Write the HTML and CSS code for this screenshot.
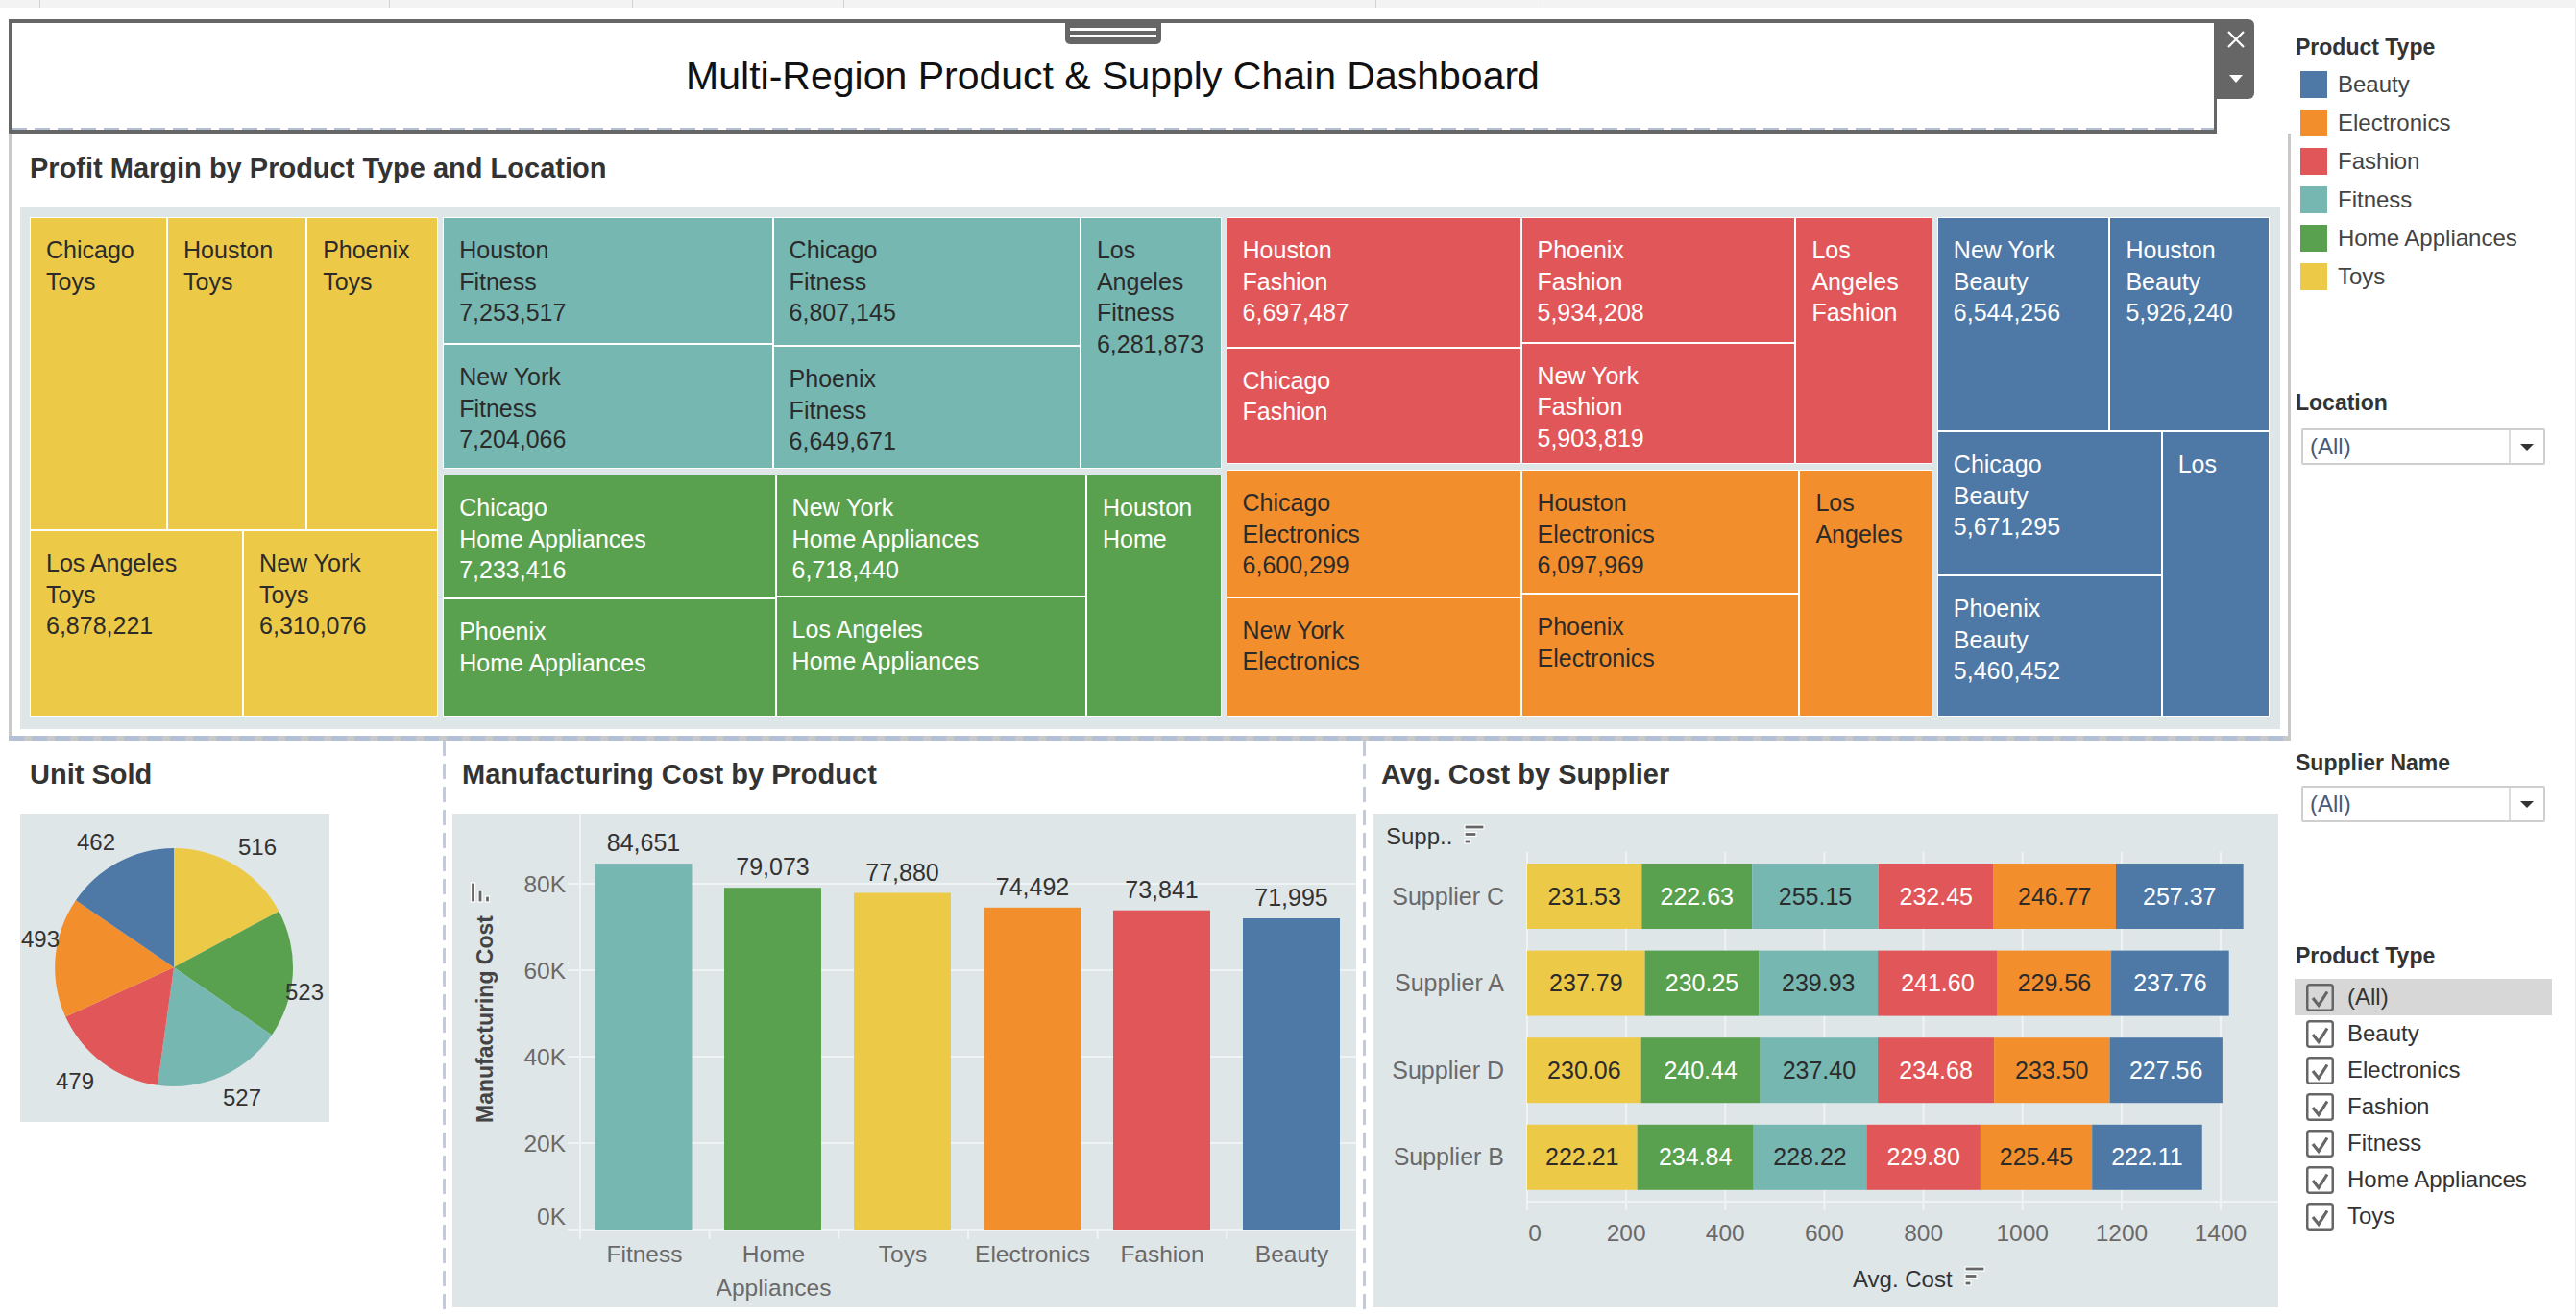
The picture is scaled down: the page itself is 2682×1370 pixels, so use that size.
FILE: index.html
```html
<!DOCTYPE html>
<html>
<head>
<meta charset="utf-8">
<link rel="stylesheet" href="styles.css">
</head>
<body>
<div class="strip">
  <div class="stab s1"></div><div class="stab s2"></div><div class="stab s3"></div><div class="stab s4"></div><div class="stab s5"></div><div class="stab s6"></div>
</div>
<div class="page">
  <div class="left">
    <div class="titlerow">
      <div class="titlebox">
        <div class="handle"></div>
        <div class="titletext">Multi-Region Product &amp; Supply Chain Dashboard</div>
        <div class="dash-in"></div>
      </div>
      <div class="tab">
        <svg class="tab-x" width="18" height="18" viewBox="0 0 18 18"><path d="M1 1 L17 17 M17 1 L1 17" stroke="#fff" stroke-width="2.2" fill="none"/></svg>
        <svg class="tab-arrow" width="14" height="8" viewBox="0 0 14 8"><path d="M0 0 H14 L7 8 Z" fill="#fff"/></svg>
      </div>
    </div>

    <div class="tmpanel">
      <div class="ptitle">Profit Margin by Product Type and Location</div>
      <div class="tmbg">
        <div class="tm">
          <div class="col" style="flex-grow:425">
            <div class="row" style="flex-grow:326">
              <div class="t toys" style="flex-grow:143"><div class="tx"><div>Chicago</div><div>Toys</div></div></div>
              <div class="t toys" style="flex-grow:145"><div class="tx"><div>Houston</div><div>Toys</div></div></div>
              <div class="t toys" style="flex-grow:137"><div class="tx"><div>Phoenix</div><div>Toys</div></div></div>
            </div>
            <div class="row" style="flex-grow:194">
              <div class="t toys" style="flex-grow:222"><div class="tx"><div>Los Angeles</div><div>Toys</div><div>6,878,221</div></div></div>
              <div class="t toys" style="flex-grow:203"><div class="tx"><div>New York</div><div>Toys</div><div>6,310,076</div></div></div>
            </div>
          </div>

          <div class="col gcol" style="flex-grow:810">
            <div class="row" style="flex-grow:261">
              <div class="col" style="flex-grow:342">
                <div class="t fit" style="flex-grow:131"><div class="tx"><div>Houston</div><div>Fitness</div><div>7,253,517</div></div></div>
                <div class="t fit" style="flex-grow:129"><div class="tx"><div>New York</div><div>Fitness</div><div>7,204,066</div></div></div>
              </div>
              <div class="col" style="flex-grow:319">
                <div class="t fit" style="flex-grow:133"><div class="tx"><div>Chicago</div><div>Fitness</div><div>6,807,145</div></div></div>
                <div class="t fit" style="flex-grow:127"><div class="tx"><div>Phoenix</div><div>Fitness</div><div>6,649,671</div></div></div>
              </div>
              <div class="t fit" style="flex-grow:146"><div class="tx"><div>Los</div><div>Angeles</div><div>Fitness</div><div>6,281,873</div></div></div>
            </div>
            <div class="row" style="flex-grow:251">
              <div class="col" style="flex-grow:345">
                <div class="t home" style="flex-grow:128"><div class="tx"><div>Chicago</div><div>Home Appliances</div><div>7,233,416</div></div></div>
                <div class="t home" style="flex-grow:122"><div class="tx"><div>Phoenix</div><div>Home Appliances</div></div></div>
              </div>
              <div class="col" style="flex-grow:322">
                <div class="t home" style="flex-grow:126"><div class="tx"><div>New York</div><div>Home Appliances</div><div>6,718,440</div></div></div>
                <div class="t home" style="flex-grow:124"><div class="tx"><div>Los Angeles</div><div>Home Appliances</div></div></div>
              </div>
              <div class="t home" style="flex-grow:140"><div class="tx"><div>Houston</div><div>Home</div></div></div>
            </div>
          </div>

          <div class="col gcol" style="flex-grow:735">
            <div class="row" style="flex-grow:257">
              <div class="col" style="flex-grow:306">
                <div class="t fash" style="flex-grow:135"><div class="tx"><div>Houston</div><div>Fashion</div><div>6,697,487</div></div></div>
                <div class="t fash" style="flex-grow:121"><div class="tx"><div>Chicago</div><div>Fashion</div></div></div>
              </div>
              <div class="col" style="flex-grow:285">
                <div class="t fash" style="flex-grow:130"><div class="tx"><div>Phoenix</div><div>Fashion</div><div>5,934,208</div></div></div>
                <div class="t fash" style="flex-grow:126"><div class="tx"><div>New York</div><div>Fashion</div><div>5,903,819</div></div></div>
              </div>
              <div class="t fash" style="flex-grow:142"><div class="tx"><div>Los</div><div>Angeles</div><div>Fashion</div></div></div>
            </div>
            <div class="row" style="flex-grow:257">
              <div class="col" style="flex-grow:306">
                <div class="t elec" style="flex-grow:132"><div class="tx"><div>Chicago</div><div>Electronics</div><div>6,600,299</div></div></div>
                <div class="t elec" style="flex-grow:124"><div class="tx"><div>New York</div><div>Electronics</div></div></div>
              </div>
              <div class="col" style="flex-grow:289">
                <div class="t elec" style="flex-grow:128"><div class="tx"><div>Houston</div><div>Electronics</div><div>6,097,969</div></div></div>
                <div class="t elec" style="flex-grow:127"><div class="tx"><div>Phoenix</div><div>Electronics</div></div></div>
              </div>
              <div class="t elec" style="flex-grow:138"><div class="tx"><div>Los</div><div>Angeles</div></div></div>
            </div>
          </div>

          <div class="col" style="flex-grow:346">
            <div class="row" style="flex-grow:223">
              <div class="t beau" style="flex-grow:179"><div class="tx"><div>New York</div><div>Beauty</div><div>6,544,256</div></div></div>
              <div class="t beau" style="flex-grow:166"><div class="tx"><div>Houston</div><div>Beauty</div><div>5,926,240</div></div></div>
            </div>
            <div class="row" style="flex-grow:296">
              <div class="col" style="flex-grow:233">
                <div class="t beau" style="flex-grow:149"><div class="tx"><div>Chicago</div><div>Beauty</div><div>5,671,295</div></div></div>
                <div class="t beau" style="flex-grow:146"><div class="tx"><div>Phoenix</div><div>Beauty</div><div>5,460,452</div></div></div>
              </div>
              <div class="t beau" style="flex-grow:112"><div class="tx"><div>Los</div></div></div>
            </div>
          </div>
        </div>
      </div>
    </div>
    <div class="hdash"></div>

    <div class="bottom">
      <div class="panel p1">
        <div class="ptitle">Unit Sold</div>
        <svg class="chart" width="322" height="321" viewBox="0 0 322 321">
          <rect width="322" height="321" fill="#dfe6e8"/>
          <path d="M160 160 L160 36 A124 124 0 0 1 269.42 101.65 Z" fill="#edc948"/>
          <path d="M160 160 L269.42 101.65 A124 124 0 0 1 261.95 230.57 Z" fill="#59a14f"/>
          <path d="M160 160 L261.95 230.57 A124 124 0 0 1 142.91 282.82 Z" fill="#76b7b2"/>
          <path d="M160 160 L142.91 282.82 A124 124 0 0 1 47.26 211.62 Z" fill="#e15759"/>
          <path d="M160 160 L47.26 211.62 A124 124 0 0 1 57.89 90.33 Z" fill="#f28e2b"/>
          <path d="M160 160 L57.89 90.33 A124 124 0 0 1 160 36 Z" fill="#4e79a7"/>
          <text class="pl" x="79" y="37.5">462</text>
          <text class="pl" x="247" y="42.5">516</text>
          <text class="pl" x="21" y="138.5">493</text>
          <text class="pl" x="296" y="193.5">523</text>
          <text class="pl" x="231" y="303.5">527</text>
          <text class="pl" x="57" y="286.5">479</text>
        </svg>
      </div>
      <div class="vdash"></div>
      <div class="panel p2">
        <div class="ptitle">Manufacturing Cost by Product</div>
        <svg class="chart" width="941" height="514" viewBox="0 0 941 514">
          <rect width="941" height="514" fill="#dfe6e8"/>
          <g stroke="#f0f3f4" stroke-width="2">
            <line x1="133" y1="0" x2="133" y2="434"/>
            <line x1="120" y1="73" x2="941" y2="73"/>
            <line x1="120" y1="163" x2="941" y2="163"/>
            <line x1="120" y1="253" x2="941" y2="253"/>
            <line x1="120" y1="343" x2="941" y2="343"/>
            <line x1="120" y1="433" x2="941" y2="433"/>
            <line x1="133" y1="434" x2="133" y2="443"/>
            <line x1="267.7" y1="434" x2="267.7" y2="443"/>
            <line x1="402.3" y1="434" x2="402.3" y2="443"/>
            <line x1="537" y1="434" x2="537" y2="443"/>
            <line x1="671.7" y1="434" x2="671.7" y2="443"/>
            <line x1="806.3" y1="434" x2="806.3" y2="443"/>
          </g>
          <rect x="148.5" y="52.1" width="101" height="380.9" fill="#76b7b2"/>
          <rect x="283" y="77.2" width="101" height="355.8" fill="#59a14f"/>
          <rect x="418" y="82.5" width="101" height="350.5" fill="#edc948"/>
          <rect x="553.5" y="97.8" width="101" height="335.2" fill="#f28e2b"/>
          <rect x="688" y="100.7" width="101" height="332.3" fill="#e15759"/>
          <rect x="823" y="109" width="101" height="324" fill="#4e79a7"/>
          <g class="vl">
            <text x="199" y="39.1">84,651</text>
            <text x="333.5" y="64.2">79,073</text>
            <text x="468.5" y="69.5">77,880</text>
            <text x="604" y="84.8">74,492</text>
            <text x="738.5" y="87.7">73,841</text>
            <text x="873.5" y="96">71,995</text>
          </g>
          <g class="tk tk-end">
            <text x="118" y="81.5">80K</text>
            <text x="118" y="171.5">60K</text>
            <text x="118" y="261.5">40K</text>
            <text x="118" y="351.5">20K</text>
            <text x="118" y="427.5">0K</text>
          </g>
          <g class="tk tk-mid">
            <text x="200" y="466.5">Fitness</text>
            <text x="334.5" y="466.5">Home</text>
            <text x="334.5" y="501.5">Appliances</text>
            <text x="469" y="466.5">Toys</text>
            <text x="604" y="466.5">Electronics</text>
            <text x="739" y="466.5">Fashion</text>
            <text x="874" y="466.5">Beauty</text>
          </g>
          <text class="axt" transform="translate(42 214) rotate(-90)">Manufacturing Cost</text>
          <g fill="#666" stroke="#fff" stroke-width="1.2">
            <rect x="19.5" y="72" width="4" height="20"/>
            <rect x="27" y="80" width="4" height="12"/>
            <rect x="34.5" y="86" width="4" height="6"/>
          </g>
        </svg>
      </div>
      <div class="vdash"></div>
      <div class="panel p3">
        <div class="ptitle">Avg. Cost by Supplier</div>
        <svg class="chart" width="943" height="514" viewBox="0 0 943 514">
          <rect width="943" height="514" fill="#dfe6e8"/>
          <g stroke="#f0f3f4" stroke-width="2">
            <line x1="161" y1="40" x2="161" y2="413"/>
            <line x1="264.1" y1="40" x2="264.1" y2="413"/>
            <line x1="367.3" y1="40" x2="367.3" y2="413"/>
            <line x1="470.4" y1="40" x2="470.4" y2="413"/>
            <line x1="573.6" y1="40" x2="573.6" y2="413"/>
            <line x1="676.7" y1="40" x2="676.7" y2="413"/>
            <line x1="779.9" y1="40" x2="779.9" y2="413"/>
            <line x1="883" y1="40" x2="883" y2="413"/>
            <line x1="161" y1="404" x2="943" y2="404"/>
          </g>
          <text class="hd" x="14" y="32">Supp..</text>
          <g fill="#666" stroke="#fff" stroke-width="1.2">
            <rect x="96" y="12" width="20" height="4"/>
            <rect x="96" y="19.5" width="12" height="4"/>
            <rect x="96" y="27" width="6" height="4"/>
          </g>
          <g class="tk tk-end sup">
            <text x="137" y="94.5">Supplier C</text>
            <text x="137" y="185.1">Supplier A</text>
            <text x="137" y="275.7">Supplier D</text>
            <text x="137" y="366.3">Supplier B</text>
          </g>
          <!-- Supplier C -->
          <rect x="161" y="52" width="119.4" height="68" fill="#edc948"/>
          <rect x="280.4" y="52" width="114.81" height="68" fill="#59a14f"/>
          <rect x="395.21" y="52" width="131.58" height="68" fill="#76b7b2"/>
          <rect x="526.79" y="52" width="119.88" height="68" fill="#e15759"/>
          <rect x="646.67" y="52" width="127.26" height="68" fill="#f28e2b"/>
          <rect x="773.93" y="52" width="132.73" height="68" fill="#4e79a7"/>
          <!-- Supplier A -->
          <rect x="161" y="142.6" width="122.63" height="68" fill="#edc948"/>
          <rect x="283.63" y="142.6" width="118.74" height="68" fill="#59a14f"/>
          <rect x="402.37" y="142.6" width="123.73" height="68" fill="#76b7b2"/>
          <rect x="526.1" y="142.6" width="124.6" height="68" fill="#e15759"/>
          <rect x="650.7" y="142.6" width="118.39" height="68" fill="#f28e2b"/>
          <rect x="769.09" y="142.6" width="122.62" height="68" fill="#4e79a7"/>
          <!-- Supplier D -->
          <rect x="161" y="233.2" width="118.64" height="68" fill="#edc948"/>
          <rect x="279.64" y="233.2" width="124" height="68" fill="#59a14f"/>
          <rect x="403.64" y="233.2" width="122.43" height="68" fill="#76b7b2"/>
          <rect x="526.07" y="233.2" width="121.03" height="68" fill="#e15759"/>
          <rect x="647.1" y="233.2" width="120.42" height="68" fill="#f28e2b"/>
          <rect x="767.52" y="233.2" width="117.36" height="68" fill="#4e79a7"/>
          <!-- Supplier B -->
          <rect x="161" y="323.8" width="114.6" height="68" fill="#edc948"/>
          <rect x="275.6" y="323.8" width="121.11" height="68" fill="#59a14f"/>
          <rect x="396.71" y="323.8" width="117.7" height="68" fill="#76b7b2"/>
          <rect x="514.41" y="323.8" width="118.51" height="68" fill="#e15759"/>
          <rect x="632.92" y="323.8" width="116.27" height="68" fill="#f28e2b"/>
          <rect x="749.19" y="323.8" width="114.55" height="68" fill="#4e79a7"/>
          <g class="sv">
            <text x="220.7" y="94.5">231.53</text>
            <text class="w" x="337.81" y="94.5">222.63</text>
            <text x="461" y="94.5">255.15</text>
            <text class="w" x="586.73" y="94.5">232.45</text>
            <text x="710.3" y="94.5">246.77</text>
            <text class="w" x="840.3" y="94.5">257.37</text>

            <text x="222.32" y="185.1">237.79</text>
            <text class="w" x="343" y="185.1">230.25</text>
            <text x="464.24" y="185.1">239.93</text>
            <text class="w" x="588.4" y="185.1">241.60</text>
            <text x="709.9" y="185.1">229.56</text>
            <text class="w" x="830.4" y="185.1">237.76</text>

            <text x="220.32" y="275.7">230.06</text>
            <text class="w" x="341.64" y="275.7">240.44</text>
            <text x="464.86" y="275.7">237.40</text>
            <text class="w" x="586.59" y="275.7">234.68</text>
            <text x="707.31" y="275.7">233.50</text>
            <text class="w" x="826.2" y="275.7">227.56</text>

            <text x="218.3" y="366.3">222.21</text>
            <text class="w" x="336.16" y="366.3">234.84</text>
            <text x="455.56" y="366.3">228.22</text>
            <text class="w" x="573.67" y="366.3">229.80</text>
            <text x="691.06" y="366.3">225.45</text>
            <text class="w" x="806.47" y="366.3">222.11</text>
          </g>
          <g class="tk tk-mid">
            <text x="169" y="444.5">0</text>
            <text x="264.1" y="444.5">200</text>
            <text x="367.3" y="444.5">400</text>
            <text x="470.4" y="444.5">600</text>
            <text x="573.6" y="444.5">800</text>
            <text x="676.7" y="444.5">1000</text>
            <text x="779.9" y="444.5">1200</text>
            <text x="883" y="444.5">1400</text>
          </g>
          <text class="hd" x="500" y="492.5">Avg. Cost</text>
          <g fill="#666" stroke="#fff" stroke-width="1.2">
            <rect x="617" y="472" width="20" height="4"/>
            <rect x="617" y="479.5" width="12" height="4"/>
            <rect x="617" y="487" width="6" height="4"/>
          </g>
        </svg>
      </div>
    </div>
  </div>

  <div class="side">
    <div class="sh sh1">Product Type</div>
    <div class="legend">
      <div class="li"><span class="sw c-beau"></span>Beauty</div>
      <div class="li"><span class="sw c-elec"></span>Electronics</div>
      <div class="li"><span class="sw c-fash"></span>Fashion</div>
      <div class="li"><span class="sw c-fit"></span>Fitness</div>
      <div class="li"><span class="sw c-home"></span>Home Appliances</div>
      <div class="li"><span class="sw c-toys"></span>Toys</div>
    </div>
    <div class="sh sh2">Location</div>
    <div class="dd dd1"><span class="ddv">(All)</span><span class="dda"><svg width="14" height="7" viewBox="0 0 14 7"><path d="M0 0 H14 L7 7 Z" fill="#333"/></svg></span></div>
    <div class="sh sh3">Supplier Name</div>
    <div class="dd dd2"><span class="ddv">(All)</span><span class="dda"><svg width="14" height="7" viewBox="0 0 14 7"><path d="M0 0 H14 L7 7 Z" fill="#333"/></svg></span></div>
    <div class="sh sh4">Product Type</div>
    <div class="flist">
      <div class="fi sel"><svg class="cb" width="29" height="29" viewBox="0 0 29 29"><rect x="1.25" y="1.25" width="26.5" height="26.5" rx="2.5" fill="none" stroke="#666" stroke-width="2.5"/><path d="M7 15 L13 22.5 L22 8.5" fill="none" stroke="#666" stroke-width="3.2"/></svg>(All)</div>
      <div class="fi"><svg class="cb" width="29" height="29" viewBox="0 0 29 29"><rect x="1.25" y="1.25" width="26.5" height="26.5" rx="2.5" fill="none" stroke="#666" stroke-width="2.5"/><path d="M7 15 L13 22.5 L22 8.5" fill="none" stroke="#666" stroke-width="3.2"/></svg>Beauty</div>
      <div class="fi"><svg class="cb" width="29" height="29" viewBox="0 0 29 29"><rect x="1.25" y="1.25" width="26.5" height="26.5" rx="2.5" fill="none" stroke="#666" stroke-width="2.5"/><path d="M7 15 L13 22.5 L22 8.5" fill="none" stroke="#666" stroke-width="3.2"/></svg>Electronics</div>
      <div class="fi"><svg class="cb" width="29" height="29" viewBox="0 0 29 29"><rect x="1.25" y="1.25" width="26.5" height="26.5" rx="2.5" fill="none" stroke="#666" stroke-width="2.5"/><path d="M7 15 L13 22.5 L22 8.5" fill="none" stroke="#666" stroke-width="3.2"/></svg>Fashion</div>
      <div class="fi"><svg class="cb" width="29" height="29" viewBox="0 0 29 29"><rect x="1.25" y="1.25" width="26.5" height="26.5" rx="2.5" fill="none" stroke="#666" stroke-width="2.5"/><path d="M7 15 L13 22.5 L22 8.5" fill="none" stroke="#666" stroke-width="3.2"/></svg>Fitness</div>
      <div class="fi"><svg class="cb" width="29" height="29" viewBox="0 0 29 29"><rect x="1.25" y="1.25" width="26.5" height="26.5" rx="2.5" fill="none" stroke="#666" stroke-width="2.5"/><path d="M7 15 L13 22.5 L22 8.5" fill="none" stroke="#666" stroke-width="3.2"/></svg>Home Appliances</div>
      <div class="fi"><svg class="cb" width="29" height="29" viewBox="0 0 29 29"><rect x="1.25" y="1.25" width="26.5" height="26.5" rx="2.5" fill="none" stroke="#666" stroke-width="2.5"/><path d="M7 15 L13 22.5 L22 8.5" fill="none" stroke="#666" stroke-width="3.2"/></svg>Toys</div>
    </div>
  </div>
</div>
</body>
</html>
```

FILE: styles.css
```css
* { box-sizing: border-box; }
html, body { margin: 0; padding: 0; }
body {
  width: 2682px;
  height: 1370px;
  overflow: hidden;
  background: #fff;
  font-family: "Liberation Sans", Arial, sans-serif;
  color: #333;
}

/* top strip */
.strip { height: 8px; background: #f3f3f3; display: flex; }
.stab { height: 8px; border-right: 1px solid #d2d2d2; }
.s1 { width: 42px; }
.s2 { width: 364px; }
.s3 { width: 253px; }
.s4 { width: 220px; }
.s5 { width: 554px; }
.s6 { width: 174px; }

.page { display: flex; }
.left { width: 2386px; flex: none; }
.side { flex: 1; padding-left: 4px; border-right: 1px solid #ececec; height: 1362px; }

/* title */
.titlerow { display: flex; align-items: flex-start; margin: 12px 0 0 9px; }
.titlebox {
  position: relative;
  width: 2299px;
  height: 119px;
  border: 3px solid #666;
  border-top-width: 4px;
  border-bottom-width: 4px;
  display: flex;
  flex-direction: column;
}
.titletext {
  flex: 1;
  display: flex;
  align-items: center;
  justify-content: center;
  font-size: 41px;
  color: #111;
  padding-top: 2px;
}
.dash-in {
  height: 2px;
  background: repeating-linear-gradient(90deg, #b3bfd5 0 16px, transparent 16px 24px);
}
.handle {
  position: absolute;
  top: 0;
  left: 50%;
  margin-left: -50px;
  width: 100px;
  height: 22px;
  background: #666;
  border-radius: 0 0 5px 5px;
}
.handle::before, .handle::after {
  content: "";
  position: absolute;
  left: 5px;
  right: 5px;
  height: 3px;
  background: #fff;
}
.handle::before { top: 5px; }
.handle::after { top: 12px; }
.tab {
  width: 39px;
  height: 83px;
  background: #666;
  border-radius: 0 6px 6px 0;
  display: flex;
  flex-direction: column;
  align-items: center;
}
.tab-x { margin-top: 12px; }
.tab-arrow { margin-top: 28px; }

/* treemap panel */
.tmpanel {
  margin-left: 9px;
  width: 2376px;
  height: 627px;
  border-left: 3px solid #c9c9c9;
  border-right: 3px solid #c9c9c9;
  padding: 19px 8px 0 9px;
}
.ptitle {
  font-size: 29px;
  line-height: 34px;
  font-weight: 700;
  color: #333;
  margin-left: 10px;
  white-space: nowrap;
}
.tmbg {
  margin-top: 24px;
  height: 543px;
  background: #dfe6e8;
  padding: 10px 11px 13px 10px;
}
.tm { display: flex; gap: 5px; height: 100%; }
.col { display: flex; flex-direction: column; flex-basis: 0; min-width: 0; min-height: 0; }
.row { display: flex; flex-basis: 0; min-width: 0; min-height: 0; }
.gcol { gap: 6px; }
.t {
  flex-basis: 0;
  min-width: 0;
  min-height: 0;
  box-shadow: inset 0 0 0 1px #fff;
  overflow: hidden;
  white-space: nowrap;
  font-size: 25px;
  line-height: 32.5px;
}
.tx { padding: 18px 0 0 17px; }
.toys { background: #edc948; color: #2b2b2b; }
.fit { background: #76b7b2; color: #2b2b2b; }
.home { background: #59a14f; color: #fff; }
.fash { background: #e15759; color: #fff; }
.elec { background: #f28e2b; color: #2b2b2b; }
.beau { background: #4e79a7; color: #fff; }

.hdash {
  margin-left: 9px;
  width: 2376px;
  height: 5px;
  background: repeating-linear-gradient(90deg, #b3bfd5 0 16px, #c8c8c8 16px 24px);
}

/* bottom row */
.bottom { display: flex; height: 599px; }
.panel { padding-top: 18px; }
.panel .chart { display: block; margin-top: 24px; }
.p1 { width: 452px; margin-left: 9px; padding-left: 12px; }
.p2 { width: 955px; padding-left: 7px; }
.p3 { width: 963px; padding-left: 7px; }
.p3 .ptitle { margin-left: 9px; }
.vdash {
  width: 3px;
  background: repeating-linear-gradient(180deg, #c0cbdf 0 16px, transparent 16px 24px);
}

/* svg text */
.chart text { font-family: "Liberation Sans", Arial, sans-serif; }
.pl { font-size: 24px; fill: #333; text-anchor: middle; }
.vl text { font-size: 25px; fill: #333; text-anchor: middle; }
.tk text { font-size: 24.5px; fill: #6a6a6a; }
.tk-end text { text-anchor: end; }
.tk-mid text { text-anchor: middle; }
.sup text { font-size: 25px; }
.axt { font-size: 23px; font-weight: 700; fill: #444; text-anchor: middle; }
.hd { font-size: 24px; fill: #333; }
.sv text { font-size: 25px; fill: #2b2b2b; text-anchor: middle; }
.sv text.w { fill: #fff; }

/* side panel */
.sh {
  font-size: 23px;
  line-height: 26px;
  font-weight: 700;
  color: #333;
  white-space: nowrap;
}
.sh1 { margin-top: 28px; }
.sh2 { margin-top: 104px; }
.sh3 { margin-top: 297px; }
.sh4 { margin-top: 126px; }
.legend { margin-top: 12px; display: flex; flex-direction: column; gap: 12px; padding-left: 5px; }
.li { display: flex; align-items: center; height: 28px; font-size: 24px; color: #444; }
.sw { width: 28px; height: 28px; margin-right: 11px; flex: none; }
.c-beau { background: #4e79a7; }
.c-elec { background: #f28e2b; }
.c-fash { background: #e15759; }
.c-fit { background: #76b7b2; }
.c-home { background: #59a14f; }
.c-toys { background: #edc948; }

.dd {
  display: flex;
  width: 254px;
  height: 38px;
  margin-left: 6px;
  border: 2px solid #cfcfcf;
  border-radius: 2px;
  background: #fff;
}
.dd1 { margin-top: 14px; }
.dd2 { margin-top: 11px; }
.ddv { flex: 1; display: flex; align-items: center; padding-left: 7px; font-size: 24px; color: #4a5a74; }
.dda { width: 36px; border-left: 2px solid #dcdcdc; display: flex; align-items: center; justify-content: center; }

.flist { margin-top: 11px; display: flex; flex-direction: column; }
.fi {
  display: flex;
  align-items: center;
  height: 38px;
  width: 268px;
  margin-left: -1px;
  padding-left: 12px;
  font-size: 24px;
  color: #333;
  white-space: nowrap;
}
.fi.sel { background: #d7d7d7; }
.cb { flex: none; margin-right: 14px; }
```
